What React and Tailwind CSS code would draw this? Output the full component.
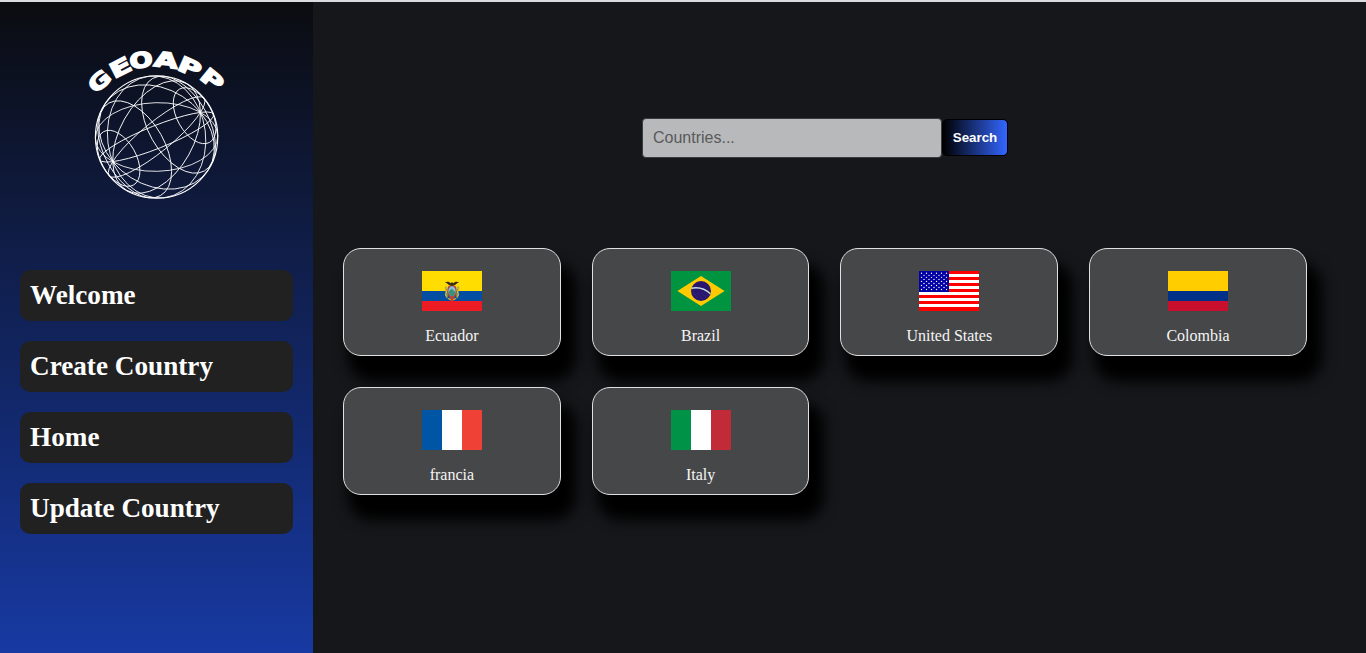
import React from "react";

const R = 61.2;
const CX = 156.6;
const CY = 137;
const POLE = [0.717, -0.402, 0.569];
const U = [0.489, 0.872, 0];
const V = [-0.496, 0.278, 0.822];
const rad = (d) => (d * Math.PI) / 180;

const meridians = [13, 43, 73, 103, 133, 163].map((d) => {
  const n = U.map((u, i) => u * Math.cos(rad(d)) + V[i] * Math.sin(rad(d)));
  return {
    cx: CX,
    cy: CY,
    rx: R,
    ry: R * Math.abs(n[2]),
    a: (Math.atan2(n[1], n[0]) * 180) / Math.PI + 90,
  };
});

const parallels = [30, 60, 120, 150].map((d) => ({
  cx: CX + R * POLE[0] * Math.cos(rad(d)),
  cy: CY + R * POLE[1] * Math.cos(rad(d)),
  rx: R * Math.sin(rad(d)),
  ry: R * Math.sin(rad(d)) * POLE[2],
  a: 60.7,
}));

const letters = [
  ["G", 99.3, 81, -42, 1.32],
  ["E", 120.3, 67.4, -27, 1.5],
  ["O", 141, 60, -9, 1.3],
  ["A", 166.2, 59.8, 7, 1.48],
  ["P", 190, 67, 24, 1.5],
  ["P", 212.3, 79.4, 39, 1.5],
];

function Logo() {
  return (
    <svg className="block h-[200px] w-[313px]" viewBox="0 2 313 200" role="img" aria-label="GEOAPP">
      <g fill="none" stroke="#fff" strokeWidth="0.85">
        <circle cx={CX} cy={CY} r={R} strokeWidth="1.1" />
        {[...meridians, ...parallels].map((e, i) => (
          <ellipse key={i} cx={e.cx} cy={e.cy} rx={e.rx} ry={e.ry} transform={`rotate(${e.a} ${e.cx} ${e.cy})`} />
        ))}
      </g>
      <g
        fill="#fff"
        stroke="#fff"
        strokeWidth="1.5"
        fontFamily="'DejaVu Sans', sans-serif"
        fontWeight="700"
        fontSize="21"
        textAnchor="middle"
      >
        {letters.map(([c, x, y, a, s], i) => (
          <text key={i} y="7.6" transform={`translate(${x} ${y}) rotate(${a}) scale(${s} 1)`}>
            {c}
          </text>
        ))}
      </g>
    </svg>
  );
}

function Stripes({ vertical, parts }) {
  let at = 0;
  return parts.map(([color, size]) => {
    const p = at;
    at += size;
    return vertical ? (
      <rect key={p} x={p} y="0" width={size} height="40" fill={color} />
    ) : (
      <rect key={p} x="0" y={p} width="60" height={size} fill={color} />
    );
  });
}

function Ecuador() {
  return (
    <>
      <Stripes parts={[["#ffdd00", 20], ["#034ea2", 10], ["#ed1c24", 10]]} />
      <path d="M23.300 14.500l2.200 1v10l-1 1.500-1.500-3 .5-3-1-3zM36.700 14.500l-2.200 1v10l1 1.500 1.500-3-.5-3 1-3z" fill="#d9c53a" />
      <path d="M23.500 16l1 3-1.200 2 1.300 2 .4 3.500M36.500 16l-1 3 1.200 2-1.300 2-.4 3.500" fill="none" stroke="#6f8a4a" strokeWidth="0.700" />
      <path d="M24.500 26l3 1.500h5l3-1.500-2.500 2.800-3 1-3-1z" fill="#d8b52a" />
      <path d="M22.800 11.800c1.700-1.700 4.500-1.400 6.100.5.500-1.300 1.700-1.300 2.200 0 1.600-1.900 4.400-2.200 6.100-.5-1.800 0-2.500.7-3.300 1.500-1 1.200-2.200 1.600-3.900 1.700-1.700-.1-2.900-.5-3.900-1.700-.8-.8-1.500-1.500-3.300-1.500z" fill="#3b2a1c" />
      <path d="M26.500 15h7c1.200 2 1.500 5.500.8 8-.7 2.500-2.200 4.200-4.300 5-2.100-.8-3.600-2.500-4.300-5-.7-2.500-.4-6 .8-8z" fill="#b8423a" />
      <ellipse cx="30" cy="20.300" rx="3.600" ry="5" fill="#86c2d8" />
      <path d="M26.500 21l3-3.500 4 3.800c-.4 2.500-1.900 4-3.500 4s-3.100-1.500-3.500-4.300z" fill="#3d8f78" />
      <path d="M28.500 27h3l-.5 3h-2z" fill="#c93a35" />
    </>
  );
}

function Brazil() {
  return (
    <>
      <rect width="60" height="40" fill="#009440" />
      <path d="M30 4.900L53.600 20 30 35.100 6.400 20z" fill="#ffcb00" />
      <circle cx="30" cy="20" r="10" fill="#28166f" />
      <path d="M20.300 17.200C27 16 34.500 18 39.300 22.700" fill="none" stroke="#c9e0dc" strokeWidth="1.400" />
      <g fill="#7d77b0">
        {[[22.5, 21], [24, 23.5], [27, 22.5], [26, 26], [29, 25], [30.5, 27.5], [33, 24.5], [34.5, 26], [36, 24], [31, 22]].map(([x, y]) => (
          <circle key={`${x}-${y}`} cx={x} cy={y} r="0.350" />
        ))}
      </g>
    </>
  );
}

function UnitedStates() {
  const stars = [];
  for (let r = 0; r < 9; r++) {
    for (let c = 0; c < (r % 2 ? 5 : 6); c++) {
      stars.push([2.5 + c * 5 + (r % 2 ? 2.5 : 0), 2.3 + r * 2.03]);
    }
  }
  return (
    <>
      <rect width="60" height="40" fill="#fff" />
      {[0, 6, 12, 18, 24, 30, 36].map((y) => (
        <rect key={y} y={y} width="60" height={y === 36 ? 4 : 3} fill="#f00" />
      ))}
      <rect width="30" height="21" fill="#0000a5" />
      {stars.map(([x, y]) => (
        <circle key={`${x}-${y}`} cx={x} cy={y} r="0.680" fill="#fff" />
      ))}
    </>
  );
}

const countries = [
  ["Ecuador", <Ecuador />],
  ["Brazil", <Brazil />],
  ["United States", <UnitedStates />],
  ["Colombia", <Stripes parts={[["#ffcd00", 20], ["#003087", 10], ["#c8102e", 10]]} />],
  ["francia", <Stripes vertical parts={[["#0055a4", 20], ["#fff", 20], ["#ef4135", 20]]} />],
  ["Italy", <Stripes vertical parts={[["#009246", 20], ["#fff", 20], ["#c12b37", 20]]} />],
];

export default function App() {
  return (
    <div className="flex h-[653px] w-[1366px] overflow-hidden border-t-2 border-[#dadcdf] bg-[#16171a] font-['Liberation_Serif',serif]">
      <aside className="flex w-[313px] shrink-0 flex-col bg-linear-to-b/srgb from-[#0b0c10] to-[#1739a2]">
        <Logo />
        <nav className="mt-[68px] flex flex-col gap-5 px-5">
          {["Welcome", "Create Country", "Home", "Update Country"].map((t) => (
            <a key={t} className="h-[51px] rounded-[10px] bg-[#212121] p-2.5 text-[27.2px] leading-[31px] font-bold text-white">
              {t}
            </a>
          ))}
        </nav>
      </aside>
      <main className="flex-1 pr-[59.2px] pl-[30px]">
        <form className="mt-[116px] ml-[299px] flex items-start font-['Liberation_Sans',sans-serif]">
          <input
            className="h-10 w-[300px] rounded-[4px] border border-[#3a3b3d] bg-[#b8b9bb] px-2.5 text-base text-black outline-none placeholder:text-[#58595a]"
            placeholder="Countries..."
          />
          <button
            type="button"
            className="mt-px h-[37px] w-[66px] rounded-[5px] border border-black bg-linear-to-r/srgb from-black to-[#3366ff] text-[13.333px] font-bold text-white"
          >
            Search
          </button>
        </form>
        <section className="mt-[90px] grid grid-cols-4 gap-[31px]">
          {countries.map(([name, flag]) => (
            <article
              key={name}
              className="flex h-[108px] flex-col items-center rounded-[18px] border border-[#e0e0e0] bg-[#464749] pt-[22px] shadow-[10px_20px_14px_5px_#000]"
            >
              <svg className="block h-10 w-[60px]" viewBox="0 0 60 40">
                {flag}
              </svg>
              <span className="mt-4 text-base leading-[18px] text-[#f5f5f5]">{name}</span>
            </article>
          ))}
        </section>
      </main>
    </div>
  );
}
